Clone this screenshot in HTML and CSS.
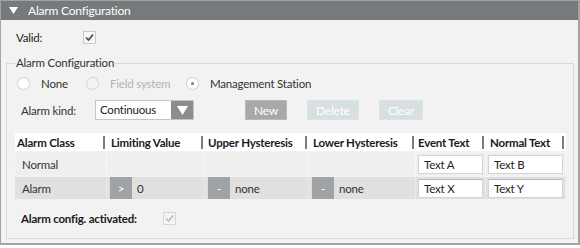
FILE: index.html
```html
<!DOCTYPE html>
<html lang="en">
<head>
    <meta charset="UTF-8">
    <title>Alarm Configuration</title>
    <link rel="stylesheet" href="styles.css">
</head>
<body>
    <div class="panel">
        <div class="panelHeader">
            <svg class="caret" width="9" height="7" viewBox="0 0 9 7"><path d="M0 0H9L4.5 7Z" fill="#fff"/></svg>
            <span>Alarm Configuration</span>
        </div>

        <div class="validRow">
            <span class="validLabel">Valid:</span>
            <span class="checkBox"><svg width="11" height="11" viewBox="0 0 11 11"><path d="M2 5.5L4.5 8L9 2.5" fill="none" stroke="#4a4a4a" stroke-width="1.7"/></svg></span>
        </div>

        <fieldset class="config">
            <legend>Alarm Configuration</legend>

            <div class="radioRow">
                <label class="radioItem first"><span class="radio"></span>None</label>
                <label class="radioItem second disabled"><span class="radio"></span>Field system</label>
                <label class="radioItem"><span class="radio checked"></span>Management Station</label>
            </div>

            <div class="kindRow">
                <span class="kindLabel">Alarm kind:</span>
                <div class="selectBox">
                    <span class="selectValue">Continuous</span>
                    <span class="selectArrow"><svg width="11" height="9" viewBox="0 0 11 9"><path d="M0 0H11L5.5 9Z" fill="#fff"/></svg></span>
                </div>
                <button class="btn active">New</button>
                <button class="btn">Delete</button>
                <button class="btn">Clear</button>
            </div>

            <div class="table">
                <div class="row head">
                    <div class="cell"><span>Alarm Class</span><i class="sep"></i></div>
                    <div class="cell"><span>Limiting Value</span><i class="sep"></i></div>
                    <div class="cell"><span>Upper Hysteresis</span><i class="sep"></i></div>
                    <div class="cell"><span>Lower Hysteresis</span><i class="sep"></i></div>
                    <div class="cell"><span>Event Text</span><i class="sep"></i></div>
                    <div class="cell"><span>Normal Text</span><i class="sep"></i></div>
                </div>
                <div class="row normal">
                    <div class="cell name">Normal</div>
                    <div class="cell"></div>
                    <div class="cell"></div>
                    <div class="cell"></div>
                    <div class="cell inputCell first"><input type="text" value="Text A"></div>
                    <div class="cell inputCell"><input type="text" value="Text B"></div>
                </div>
                <div class="row alarm">
                    <div class="cell name">Alarm</div>
                    <div class="cell"><span class="opBtn">&gt;</span><span class="val">0</span></div>
                    <div class="cell"><span class="opBtn">-</span><span class="val">none</span></div>
                    <div class="cell"><span class="opBtn">-</span><span class="val">none</span></div>
                    <div class="cell inputCell first"><input type="text" value="Text X"></div>
                    <div class="cell inputCell"><input type="text" value="Text Y"></div>
                </div>
            </div>

            <div class="activeRow">
                <span class="activeLabel">Alarm config. activated:</span>
                <span class="checkBox disabled"><svg width="11" height="11" viewBox="0 0 11 11"><path d="M2 5.5L4.5 8L9 2.5" fill="none" stroke="#b4b4b4" stroke-width="1.4"/></svg></span>
            </div>
        </fieldset>
    </div>
</body>
</html>
```

FILE: styles.css
```css
* {
    margin: 0;
    padding: 0;
    box-sizing: border-box;
    font-family: Lato, "Open Sans", sans-serif;
    letter-spacing: -0.2px;
}

body {
    background: #ffffff;
}

.panel {
    width: 580px;
    height: 245px;
    border: 1px solid #a3a3a3;
    border-right-width: 2px;
    border-bottom-width: 2px;
    background: #f2f2f2;
}

.panelHeader {
    height: 19px;
    background: #767a7c;
    color: #ffffff;
    display: flex;
    align-items: center;
    font-size: 12px;
    letter-spacing: -0.3px;
    padding-left: 8px;
}

.caret {
    margin-right: 10px;
}

.validRow {
    display: flex;
    align-items: center;
    height: 14px;
    margin-top: 10px;
    padding-left: 15px;
    font-size: 11.5px;
    color: #222;
}

.validLabel {
    width: 67px;
}

.checkBox {
    width: 13px;
    height: 13px;
    border: 1px solid #c8c8c8;
    background: #f7f7f7;
    display: flex;
    align-items: center;
    justify-content: center;
}

.checkBox.disabled {
    border-color: #d6d6d6;
    background: #f4f4f4;
}

.config {
    margin: 12px 4px 0 5px;
    border: 1px solid #d9d9d9;
    padding: 0 6px 13px 8px;
    font-size: 11.5px;
    color: #333;
}

.config legend {
    padding: 0 1px;
    line-height: 14px;
    color: #333;
}

.radioRow {
    display: flex;
    align-items: center;
    height: 14px;
    margin-top: 6px;
}

.radioItem {
    display: flex;
    align-items: center;
    gap: 11px;
}

.radioItem.first {
    margin-left: 2px;
    width: 69px;
}

.radioItem.second {
    width: 100px;
}

.radioItem.disabled {
    color: #b3b3b3;
}

.radio {
    width: 13px;
    height: 13px;
    border-radius: 50%;
    border: 1px solid #cfcfcf;
    background: #ffffff;
    display: flex;
    align-items: center;
    justify-content: center;
}

.disabled .radio {
    background: #f4f4f4;
    border-color: #d2d2d2;
}

.radio.checked::after {
    content: "";
    width: 3px;
    height: 3px;
    border-radius: 50%;
    background: #7a7a7a;
}

.kindRow {
    display: flex;
    align-items: center;
    height: 20px;
    margin-top: 10px;
}

.kindLabel {
    margin-left: 6px;
    width: 74px;
}

.selectBox {
    width: 99px;
    height: 20px;
    display: flex;
    border: 1px solid #c4c4c4;
    background: #ffffff;
}

.selectValue {
    flex: 1;
    padding-left: 4px;
    line-height: 17px;
    color: #222;
}

.selectArrow {
    width: 22px;
    background: #8a8d8f;
    display: flex;
    align-items: center;
    justify-content: center;
}

.btn {
    height: 20px;
    border: 1px solid #dde4e6;
    background: #d6dfe2;
    color: #ffffff;
    font-size: 12px;
    padding: 0 8px;
    margin-left: 20px;
}

.btn.active {
    margin-left: 51px;
    background: #a8a8a8;
    border-color: #b8b8b8;
    width: 42px;
}

.table {
    margin-top: 13px;
    display: flex;
    flex-direction: column;
    gap: 2px;
}

.row {
    display: grid;
    grid-template-columns: 92px 98px 104px 107px 70px 80px;
    width: 551px;
}

.row.head {
    height: 18px;
    background: #ffffff;
    font-weight: bold;
    color: #1a1a1a;
}

.head .cell {
    display: flex;
    align-items: center;
    padding-left: 2px;
}

.head .cell:nth-child(2),
.head .cell:nth-child(4),
.head .cell:nth-child(6) {
    padding-left: 4px;
}

.head .cell:nth-child(3) {
    padding-left: 3px;
}

.sep {
    margin-left: auto;
    margin-right: 2px;
    width: 2px;
    height: 13px;
    background: #7c7c7c;
}

.row.normal,
.row.alarm {
    height: 22px;
}

.row.normal .cell {
    background: #efefef;
    border-right: 1px solid #f7f7f7;
}

.row.alarm .cell {
    background: #e0e0e0;
    border-right: 1px solid #ebebeb;
}

.row .cell {
    display: flex;
    align-items: center;
}

.cell.name {
    padding-left: 7px;
    color: #333;
}

.opBtn {
    width: 22px;
    height: 22px;
    margin-left: 3px;
    background: #a0a3a5;
    color: #ffffff;
    display: flex;
    align-items: center;
    justify-content: center;
}

.val {
    margin-left: 5px;
    color: #333;
}

.inputCell {
    padding: 0 2px;
}

.inputCell input {
    width: 100%;
    height: 19px;
    border: 1px solid #d4d4d4;
    background: #ffffff;
    font-size: 11.5px;
    padding-left: 5px;
    color: #222;
}

.alarm .inputCell input {
    border-top-color: #b8b8b8;
}

.activeRow {
    display: flex;
    align-items: center;
    height: 14px;
    margin-top: 12px;
    padding-left: 6px;
}

.activeLabel {
    font-weight: bold;
    color: #1a1a1a;
    width: 142px;
}
```
